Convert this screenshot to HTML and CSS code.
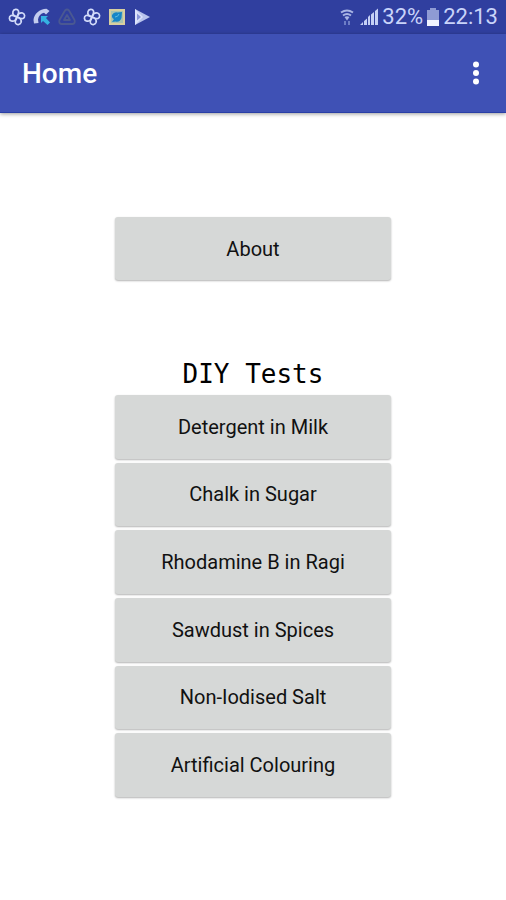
FILE: index.html
```html
<!DOCTYPE html>
<html lang="en">
<head>
<meta charset="utf-8">
<meta name="viewport" content="width=device-width, initial-scale=1">
<title>Home</title>
<link rel="stylesheet" href="styles.css">
</head>
<body>
<svg class="defs" aria-hidden="true">
  <symbol id="pinwheel" viewBox="0 0 18 18">
    <g fill="none" stroke="#d3dcfa" stroke-width="1.7" stroke-linejoin="round">
      <path id="blade" d="M9 9C6 8.500 4.200 6 5 3.400C5.800 1 9.500.6 10.500 3C11.200 5 10.200 7 9 9Z"/>
      <use href="#blade" transform="rotate(90 9 9)"/>
      <use href="#blade" transform="rotate(180 9 9)"/>
      <use href="#blade" transform="rotate(270 9 9)"/>
    </g>
  </symbol>
</svg>
<div class="status">
  <div class="status-group notices">
    <svg class="icon" aria-hidden="true"><use href="#pinwheel"/></svg>
    <svg class="icon" viewBox="0 0 18 18" aria-hidden="true">
      <path d="M1 15.500L5.500 15L5 11.500C5.500 8 8 5.500 11 4.800L13 6.500L16.500 3L13.500.8C6.500 1 1 6 .5 12Z" fill="#c3ccee"/>
      <path d="M8 8H15L13 10L17 14.500L14.500 17L10 13L8 15Z" fill="#35b2e2"/>
    </svg>
    <svg class="icon" viewBox="0 0 18 18" aria-hidden="true">
      <g fill="none" stroke="#4a5892" stroke-width="1.800" stroke-linejoin="round">
        <path d="M7 2.500Q9 .5 11 2.500L16.500 12Q17.500 15.500 14.500 16H3.500Q.5 15.500 1.500 12Z"/>
        <path d="M9 7L12 12H6Z"/>
      </g>
    </svg>
    <svg class="icon" aria-hidden="true"><use href="#pinwheel"/></svg>
    <svg class="icon" viewBox="0 0 18 18" aria-hidden="true">
      <rect x="1" y="1" width="16" height="16" fill="#d8cf9f"/>
      <rect x="3" y="3" width="12" height="12" fill="#a9c4b0"/>
      <path d="M4 7Q6 3.500 9.500 4.500L14 4L13.500 10Q12 14.500 7.500 13.500L4 14L6 11Q3.500 10 4 7Z" fill="#1686c8"/>
      <path d="M7 9Q10 9 11 6" fill="none" stroke="#5ebde0"/>
    </svg>
    <svg class="icon" viewBox="0 0 18 18" aria-hidden="true">
      <path d="M2 1L17 9L2 17Z" fill="#b9c4ec"/>
      <path d="M2 1L10 9L2 17Z" fill="#dce3fb"/>
      <path d="M4 5.500L8 9L4 12.500Z" fill="#8b98d8"/>
    </svg>
  </div>
  <div class="status-group readings">
    <svg class="icon" viewBox="0 0 18 18" aria-hidden="true">
      <g fill="none" stroke="#a9b5e4" stroke-width="2">
        <path d="M3 4.500Q9 .5 15 4.500M5 7.500Q9 4.500 13 7.500"/>
      </g>
      <path d="M6.500 9Q9 7.500 11.500 9L9 12.500Z" fill="#a9b5e4"/>
      <path d="M6 13H8V17H6ZM10 13H12V17H10Z" fill="#6d7dc6"/>
    </svg>
    <svg class="icon" viewBox="0 0 18 18" aria-hidden="true">
      <path d="M0 17L3 14V17ZM4 17V13L7 10.500V17ZM8 17V9L10 7V17ZM11 17V6.500L14 4V17ZM15 17V3L18 .5V17Z" fill="#c5d0f5"/>
    </svg>
    <span>32%</span>
    <svg class="battery" viewBox="0 0 12 18" aria-hidden="true">
      <path d="M3 0H9V2H12V18H0V2H3Z" fill="#8f9bd4"/>
      <path d="M0 12H12V18H0Z" fill="#f0f3ff"/>
    </svg>
    <time>22:13</time>
  </div>
</div>
<header class="appbar">
  <h1>Home</h1>
  <button class="more" type="button" aria-label="More options">
    <svg viewBox="0 0 8 24" aria-hidden="true"><g fill="#fff"><circle cx="4" cy="3.500" r="3"/><circle cx="4" cy="12" r="3"/><circle cx="4" cy="20.500" r="3"/></g></svg>
  </button>
</header>
<main class="content">
  <button class="action" type="button">About</button>
  <section class="tests">
    <h2>DIY Tests</h2>
    <div class="test-list">
      <button class="action" type="button">Detergent in Milk</button>
      <button class="action" type="button">Chalk in Sugar</button>
      <button class="action" type="button">Rhodamine B in Ragi</button>
      <button class="action" type="button">Sawdust in Spices</button>
      <button class="action" type="button">Non-Iodised Salt</button>
      <button class="action" type="button">Artificial Colouring</button>
    </div>
  </section>
</main>
</body>
</html>
```
FILE: styles.css
```css
* { box-sizing: border-box; }

body {
  margin: 0;
  background: #fff;
  color: #111;
  font-family: Roboto, "Liberation Sans", sans-serif;
}

.defs { position: absolute; width: 0; height: 0; }

.status {
  display: flex;
  align-items: center;
  justify-content: space-between;
  height: 34px;
  padding: 0 8px;
  background: #303f9f;
  color: #c9d4fa;
  font-size: 22px;
  line-height: 24px;
}

.status-group { display: flex; align-items: center; }
.notices { gap: 7px; }
.readings { gap: 4px; }
.icon { display: block; width: 18px; height: 18px; }
.battery { display: block; width: 12px; height: 18px; }

.appbar {
  display: flex;
  align-items: center;
  justify-content: space-between;
  height: 79px;
  padding: 0 16px 0 22px;
  background: #3f51b5;
  border-bottom: 1px solid #2a3fa6;
  box-shadow: 0 1px 4px rgba(0, 0, 0, .4);
  color: #fff;
}

.appbar h1 {
  margin: 0;
  padding-top: 2px;
  font-size: 28px;
  font-weight: 500;
  line-height: 32px;
}

.more {
  display: flex;
  justify-content: center;
  width: 28px;
  padding: 8px 0;
  border: 0;
  background: none;
}

.more svg { width: 8px; height: 24px; }

.content {
  display: grid;
  width: min(276px, 100% - 32px);
  margin: 0 auto;
  padding: 104px 0 32px;
}

.action {
  min-height: 63px;
  padding: 8px 16px;
  border: 0;
  border-radius: 3px;
  background: #d6d8d7;
  box-shadow: 0 1px 2px rgba(0, 0, 0, .3);
  color: #111;
  font: 400 20px/24px Roboto, "Liberation Sans", sans-serif;
}

.tests { margin-top: 78px; }

.tests h2 {
  margin: 0 0 5px;
  color: #000;
  font: 400 26px/32px "DejaVu Sans Mono", "Liberation Mono", monospace;
  text-align: center;
}

.test-list {
  display: grid;
  grid-auto-rows: 1fr;
  gap: 4px;
  min-height: 402px;
}
```
